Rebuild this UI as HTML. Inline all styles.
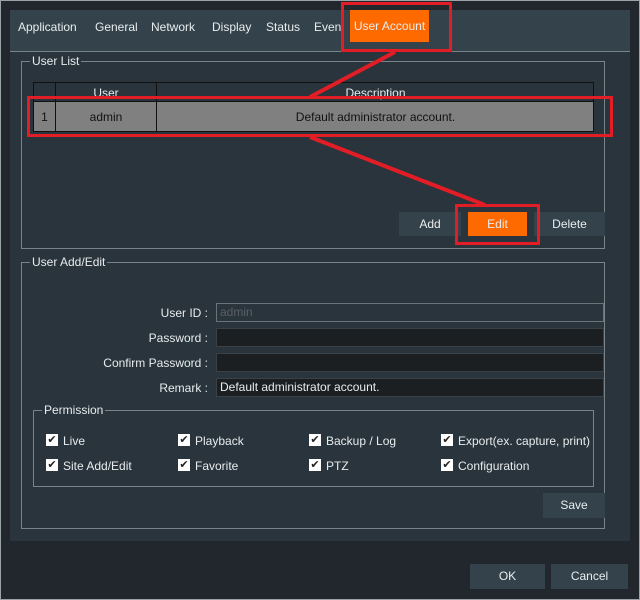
<!DOCTYPE html>
<html><head><style>
*{margin:0;padding:0;box-sizing:border-box}
body{width:640px;height:600px;background:#22272d;font-family:"Liberation Sans",sans-serif;font-size:12px;color:#e8ecee;position:relative;overflow:hidden}
.a{position:absolute}
.frame{left:0;top:0;width:640px;height:600px;border:1px solid #9aa3a8}
.panel{left:10px;top:10px;width:620px;height:531px;background:#29343c}
.tabbar{left:10px;top:10px;width:620px;height:42px;background:#34434b;border-bottom:1px solid #7a8388}
.tab{top:20px;font-size:12px}
.fs{border:1px solid #7a8388}
.lbl{background:#29343c;padding:0 2px;font-size:12px;top:-8px}
.btn{background:#34434b;text-align:center;line-height:24px;height:24px}
.inp{left:216px;width:388px;height:19px;background:#1b1f22;border:1px solid #3a4248;padding-left:3px;line-height:17px}
.rl{right:432px;text-align:right;white-space:nowrap}
.cb{width:12px;height:12px;background:#fff;color:#222;font-size:11px;line-height:12px;text-align:center}
.red{border:3px solid #e31d25}
</style></head><body>
<div class="a frame"></div>
<div class="a panel"></div>
<div class="a tabbar"></div>
<div class="a tab" style="left:18px">Application</div>
<div class="a tab" style="left:95px">General</div>
<div class="a tab" style="left:151px">Network</div>
<div class="a tab" style="left:212px">Display</div>
<div class="a tab" style="left:266px">Status</div>
<div class="a tab" style="left:314px">Even</div>
<div class="a" style="left:350px;top:10px;width:79px;height:32px;background:#ff6a00;text-align:center;line-height:32px">User Account</div>

<div class="a fs" style="left:21px;top:61px;width:584px;height:188px"><span class="a lbl" style="left:8px">User List</span></div>
<div class="a" style="left:33px;top:82px;width:561px;height:50px;border:1px solid #111;background:#29343c;overflow:hidden">
 <div class="a" style="left:21px;top:0;width:1px;height:50px;background:#111"></div>
 <div class="a" style="left:122px;top:0;width:1px;height:50px;background:#111"></div>
 <div class="a" style="left:22px;width:100px;top:3px;text-align:center">User</div>
 <div class="a" style="left:123px;width:437px;top:3px;text-align:center">Description</div>
 <div class="a" style="left:0;top:18px;width:561px;height:31px;background:#808080;color:#111;border-top:1px solid #111">
  <div class="a" style="left:0;width:21px;top:8px;text-align:center">1</div>
  <div class="a" style="left:21px;top:0;width:1px;height:31px;background:#111"></div>
  <div class="a" style="left:122px;top:0;width:1px;height:31px;background:#111"></div>
  <div class="a" style="left:22px;width:100px;top:8px;text-align:center">admin</div>
  <div class="a" style="left:123px;width:437px;top:8px;text-align:center">Default administrator account.</div>
 </div>
</div>
<div class="a btn" style="left:399px;top:212px;width:62px">Add</div>
<div class="a btn" style="left:468px;top:212px;width:59px;background:#ff6a00">Edit</div>
<div class="a btn" style="left:534px;top:212px;width:71px">Delete</div>

<div class="a fs" style="left:21px;top:262px;width:584px;height:267px"><span class="a lbl" style="left:8px">User Add/Edit</span></div>
<div class="a rl" style="top:306px">User ID :</div>
<div class="a inp" style="top:303px;color:#5a6065;background:#29343c;border-color:#6a7378">admin</div>
<div class="a rl" style="top:331px">Password :</div>
<div class="a inp" style="top:328px"></div>
<div class="a rl" style="top:356px">Confirm Password :</div>
<div class="a inp" style="top:353px"></div>
<div class="a rl" style="top:381px">Remark :</div>
<div class="a inp" style="top:378px">Default administrator account.</div>

<div class="a fs" style="left:33px;top:410px;width:561px;height:77px"><span class="a lbl" style="left:8px">Permission</span></div>
<div class="a cb" style="left:46px;top:434px">✔</div><div class="a" style="left:63px;top:434px">Live</div>
<div class="a cb" style="left:178px;top:434px">✔</div><div class="a" style="left:195px;top:434px">Playback</div>
<div class="a cb" style="left:309px;top:434px">✔</div><div class="a" style="left:326px;top:434px">Backup / Log</div>
<div class="a cb" style="left:441px;top:434px">✔</div><div class="a" style="left:458px;top:434px">Export(ex. capture, print)</div>
<div class="a cb" style="left:46px;top:459px">✔</div><div class="a" style="left:63px;top:459px">Site Add/Edit</div>
<div class="a cb" style="left:178px;top:459px">✔</div><div class="a" style="left:195px;top:459px">Favorite</div>
<div class="a cb" style="left:309px;top:459px">✔</div><div class="a" style="left:326px;top:459px">PTZ</div>
<div class="a cb" style="left:441px;top:459px">✔</div><div class="a" style="left:458px;top:459px">Configuration</div>
<div class="a btn" style="left:543px;top:493px;width:62px;height:25px;line-height:25px">Save</div>

<div class="a btn" style="left:470px;top:564px;width:75px;height:25px;line-height:25px">OK</div>
<div class="a btn" style="left:551px;top:564px;width:77px;height:25px;line-height:25px">Cancel</div>

<svg class="a" style="left:0;top:0" width="640" height="600"><g stroke="#e31d25" stroke-width="4" fill="none"><line x1="395" y1="52" x2="310" y2="97"/><line x1="310" y1="137" x2="485" y2="205"/></g></svg>
<div class="a red" style="left:341px;top:2px;width:111px;height:50px"></div>
<div class="a red" style="left:27px;top:96px;width:586px;height:41px"></div>
<div class="a red" style="left:455px;top:204px;width:85px;height:41px"></div>
</body></html>
